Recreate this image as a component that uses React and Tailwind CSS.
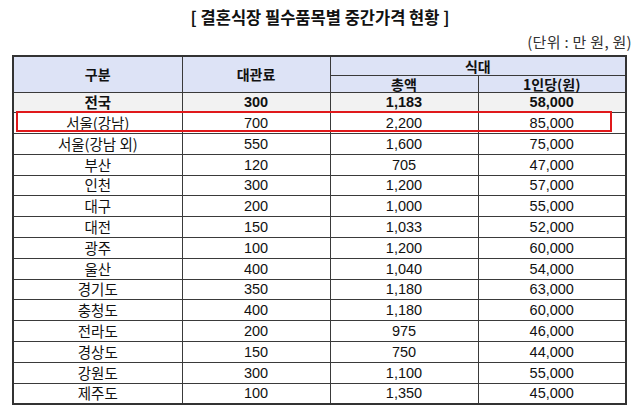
export default function App() {
  const rows = [
    ["서울(강남)", "700", "2,200", "85,000"],
    ["서울(강남 외)", "550", "1,600", "75,000"],
    ["부산", "120", "705", "47,000"],
    ["인천", "300", "1,200", "57,000"],
    ["대구", "200", "1,000", "55,000"],
    ["대전", "150", "1,033", "52,000"],
    ["광주", "100", "1,200", "60,000"],
    ["울산", "400", "1,040", "54,000"],
    ["경기도", "350", "1,180", "63,000"],
    ["충청도", "400", "1,180", "60,000"],
    ["전라도", "200", "975", "46,000"],
    ["경상도", "150", "750", "44,000"],
    ["강원도", "300", "1,100", "55,000"],
    ["제주도", "100", "1,350", "45,000"],
  ];
  const cell = "border border-[#3a3a3a] p-0 text-center align-middle";
  const num = '"Liberation Sans", "Noto Sans CJK KR", sans-serif';
  return (
    <div
      className="relative w-[640px] h-[409px] bg-white text-[#111] overflow-hidden"
      style={{ fontFamily: '"Noto Sans CJK KR", "Noto Sans", sans-serif' }}
    >
      <div className="mt-[6px] text-center text-[16.5px] leading-[22px] font-bold">
        [ 결혼식장 필수품목별 중간가격 현황 ]
      </div>
      <div className="mt-[5px] pr-[8px] text-right text-[15px] leading-[18px] tracking-[0.3px] text-[#333]">
        (단위 : 만 원, 원)
      </div>
      <table className="mt-[4px] ml-[12px] w-[613px] border-collapse border-2 border-[#333] table-fixed text-[14.5px] leading-none">
        <colgroup>
          <col className="w-[169px]" />
          <col className="w-[148px]" />
          <col className="w-[148px]" />
          <col className="w-[148px]" />
        </colgroup>
        <thead className="text-[14px] leading-[14px]">
          <tr className="h-[19px] bg-[#dde3f6] font-bold">
            <th rowSpan={2} className={cell}>구분</th>
            <th rowSpan={2} className={cell}>대관료</th>
            <th colSpan={2} className={cell}>식대</th>
          </tr>
          <tr className="h-[17px] bg-[#dde3f6] font-bold">
            <th className={cell}>총액</th>
            <th className={cell}>1인당(원)</th>
          </tr>
        </thead>
        <tbody>
          <tr className="h-[20.8px] bg-[#f2f2f2] font-bold">
            <td className={cell}>전국</td>
            <td className={cell} style={{ fontFamily: num }}>300</td>
            <td className={cell} style={{ fontFamily: num }}>1,183</td>
            <td className={cell} style={{ fontFamily: num }}>58,000</td>
          </tr>
          {rows.map((r) => (
            <tr key={r[0]} className="h-[20.8px]">
              {r.map((v, i) => (
                <td key={i} className={cell} style={i > 0 ? { fontFamily: num } : undefined}>{v}</td>
              ))}
            </tr>
          ))}
        </tbody>
      </table>
      <div className="absolute left-[16px] top-[111px] w-[596px] h-[21px] border-2 border-[#e0191b]" />
    </div>
  );
}
